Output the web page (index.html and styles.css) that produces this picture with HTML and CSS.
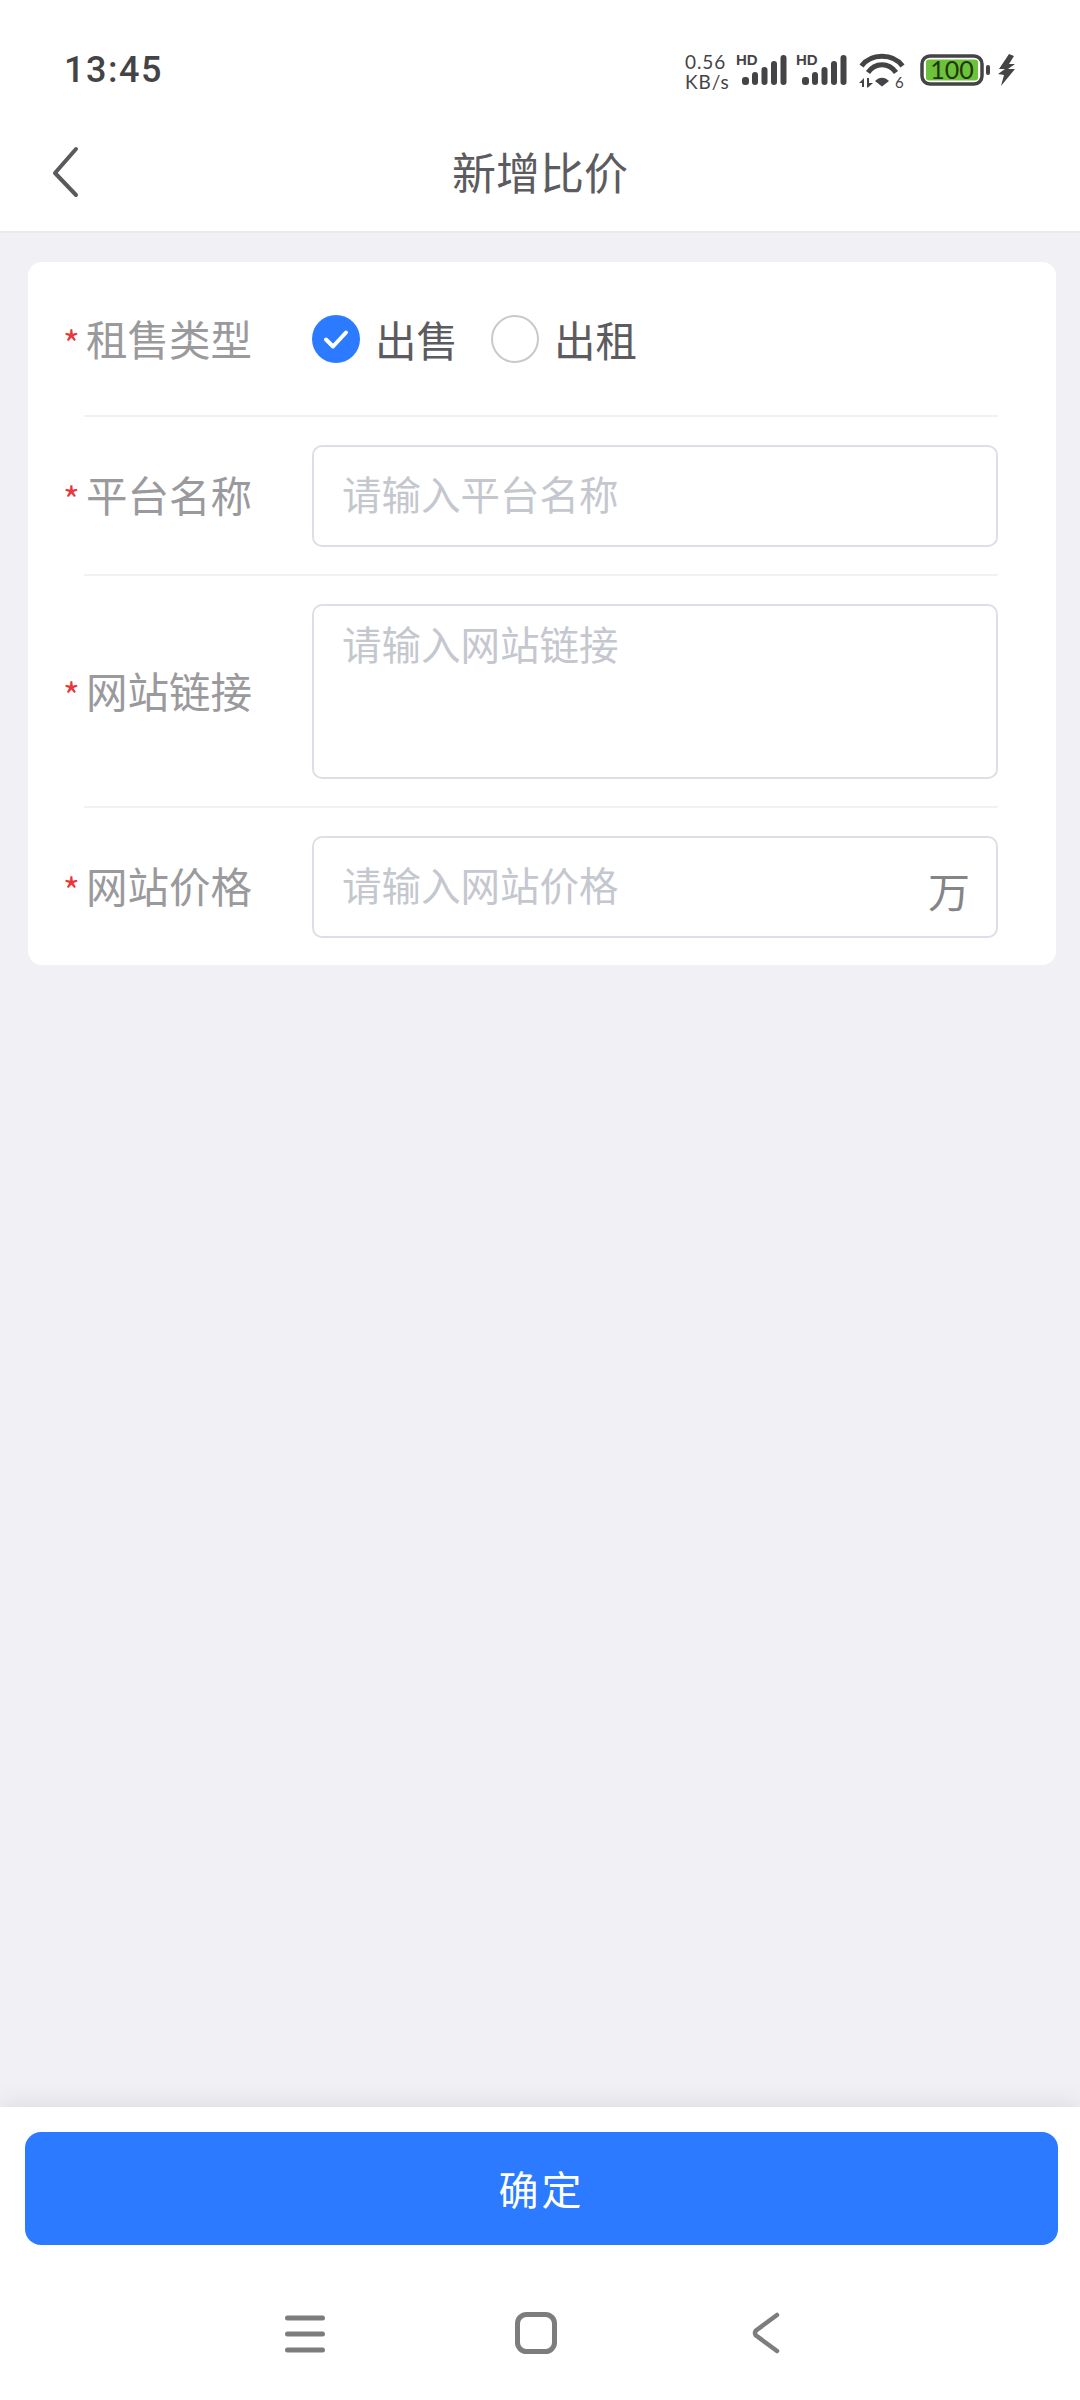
FILE: index.html
```html
<!DOCTYPE html>
<html lang="zh-CN">
<head>
<meta charset="utf-8">
<title>新增比价</title>
<link rel="stylesheet" href="styles.css">
</head>
<body>
<div class="page">
  <header class="top">
    <div class="status">
      <span class="time">13:45</span>
      <div class="status-icons">
        <div class="speed"><span>0.56</span><span>KB/s</span></div>
        <svg class="signal" width="52" height="34" viewBox="0 0 52 34">
          <text class="hd" x="0" y="13">HD</text>
          <rect x="6" y="25" width="7" height="8" rx="3" />
          <rect x="16" y="20" width="6" height="13" rx="3" />
          <rect x="25.500" y="15" width="6" height="18" rx="3" />
          <rect x="35" y="9" width="6" height="24" rx="3" />
          <rect x="44.500" y="3" width="6" height="30" rx="3" />
        </svg>
        <svg class="signal" width="52" height="34" viewBox="0 0 52 34">
          <text class="hd" x="0" y="13">HD</text>
          <rect x="6" y="25" width="7" height="8" rx="3" />
          <rect x="16" y="20" width="6" height="13" rx="3" />
          <rect x="25.500" y="15" width="6" height="18" rx="3" />
          <rect x="35" y="9" width="6" height="24" rx="3" />
          <rect x="44.500" y="3" width="6" height="30" rx="3" />
        </svg>
        <svg class="wifi" width="48" height="42" viewBox="0 0 48 42">
          <path class="arc" d="M3.500 14C13 1 35 1 44.500 14" />
          <path class="arc" d="M10 20.500C17 10 31 10 38 20.500" />
          <path class="fill" d="M17 29C21 24.500 27 24.500 31 29L24 34.500Z" />
          <path class="fill" d="M1 31L6 26V35H4V31ZM9 26H11V31H15L10 35.500H9Z" />
          <text class="wifi-six" x="37" y="35.500">6</text>
        </svg>
        <svg class="battery" width="72" height="34" viewBox="0 0 72 34">
          <rect class="shell" x="2" y="2" width="60" height="28" rx="8" />
          <rect class="level" x="6" y="5.500" width="52" height="21" rx="3" />
          <text class="level-text" x="32" y="25">100</text>
          <rect class="tip" x="66" y="11" width="4" height="10" rx="2" />
        </svg>
        <svg class="bolt" width="18" height="32" viewBox="0 0 18 32">
          <path d="M11 0L1 15H7L0 20L6 21L3 32L17 15H10L17 10H11L16 2Z" />
        </svg>
      </div>
    </div>
    <nav class="title-bar">
      <svg class="back" width="30" height="52" viewBox="0 0 30 52">
        <path d="M26 3L5 27L26 49" />
      </svg>
      <h1 class="title">新增比价</h1>
    </nav>
  </header>

  <main class="card">
    <div class="row row-type">
      <label class="label"><span class="star">*</span>租售类型</label>
      <div class="options">
        <span class="radio radio-on">
          <svg width="48" height="48" viewBox="0 0 48 48"><circle class="on-disc" cx="24" cy="24" r="24" /><path class="on-check" d="M14 24.500L21 31.500L34 17.500" /></svg>
        </span>
        <span class="option-text">出售</span>
        <span class="radio radio-off"></span>
        <span class="option-text">出租</span>
      </div>
    </div>
    <div class="row">
      <label class="label"><span class="star">*</span>平台名称</label>
      <div class="box box-short"><input class="field" placeholder="请输入平台名称"></div>
    </div>
    <div class="row row-area">
      <label class="label"><span class="star">*</span>网站链接</label>
      <div class="box box-tall"><textarea class="field area" placeholder="请输入网站链接"></textarea></div>
    </div>
    <div class="row">
      <label class="label"><span class="star">*</span>网站价格</label>
      <div class="box box-short box-unit"><input class="field" placeholder="请输入网站价格"><span class="unit">万</span></div>
    </div>
  </main>

  <footer class="footer">
    <button class="confirm">确定</button>
    <div class="sys-nav">
      <svg class="sys-menu" width="40" height="38" viewBox="0 0 40 38">
        <path d="M2.500 3H37.500M2.500 19H37.500M2.500 35H37.500" />
      </svg>
      <svg class="sys-home" width="42" height="42" viewBox="0 0 42 42">
        <rect x="2.500" y="2.500" width="37" height="37" rx="9" />
      </svg>
      <svg class="sys-back" width="28" height="42" viewBox="0 0 28 42">
        <path d="M25 3L4 18.500Q2 21 4 23.500L25 39" />
      </svg>
    </div>
  </footer>
</div>
</body>
</html>
```

FILE: styles.css
```css
* { box-sizing: border-box; }

html, body {
  margin: 0;
  padding: 0;
}

body {
  font-family: "Noto Sans CJK SC", "Noto Sans", sans-serif;
  color: #5c5c60;
}

.page {
  width: 1080px;
  height: 2400px;
  background: #f0f0f5;
  display: flex;
  flex-direction: column;
  overflow: hidden;
}

/* status bar + title */
.top {
  background: #fff;
  border-bottom: 2px solid #e9e9ee;
  height: 233px;
}

.status {
  height: 130px;
  padding: 50px 0 0 64px;
  display: flex;
  justify-content: space-between;
  align-items: flex-start;
}

.time {
  font-family: Roboto, sans-serif;
  font-weight: 500;
  font-size: 36px;
  line-height: 40px;
  letter-spacing: 1.500px;
  color: #444446;
}

.status-icons {
  display: flex;
  align-items: flex-start;
  padding: 2px 64px 0 0;
}

.speed {
  display: flex;
  flex-direction: column;
  width: 51px;
  font-family: Lato, sans-serif;
  font-size: 19px;
  line-height: 20px;
  color: #444446;
  letter-spacing: 0.900px;
}

.signal {
  display: block;
  margin: 0 8px 0 0;
  fill: #444446;
}

.hd {
  font-family: "Liberation Sans", sans-serif;
  font-weight: 700;
  font-size: 15px;
  fill: #444446;
}

.wifi {
  display: block;
  margin: 0 14px 0 2px;
}

.arc {
  fill: none;
  stroke: #444446;
  stroke-width: 5;
  stroke-linecap: butt;
}

.fill { fill: #444446; }

.wifi-six {
  font-family: Lato, sans-serif;
  font-size: 15px;
  fill: #444446;
}

.battery {
  display: block;
  margin: 2px 6px 0 0;
}

.shell {
  fill: #fff;
  stroke: #444446;
  stroke-width: 3.500;
}

.level { fill: #6cc23b; }

.level-text {
  font-family: Lato, sans-serif;
  font-size: 25px;
  fill: #23350f;
  text-anchor: middle;
}

.tip { fill: #444446; }

.bolt {
  display: block;
  margin-top: 2px;
  fill: #444446;
}

.title-bar {
  position: relative;
  height: 101px;
  padding-bottom: 20px;
  display: flex;
  align-items: center;
  justify-content: center;
}

.back {
  position: absolute;
  left: 50px;
  top: 16px;
  fill: none;
  stroke: #5a5a5e;
  stroke-width: 4;
  stroke-linecap: round;
  stroke-linejoin: round;
}

.title {
  margin: 0;
  font-size: 44px;
  font-weight: 400;
  line-height: 60px;
  color: #5c5c60;
}

/* form card */
.card {
  margin: 29px 24px 0 28px;
  height: 703px;
  padding: 0 58px 0 56px;
  background: #fff;
  border-radius: 14px;
  overflow: hidden;
}

.row {
  display: flex;
  align-items: center;
  padding: 28px 0 27px;
  border-bottom: 2px solid #f2f2f5;
}

.row-type {
  height: 155px;
  padding: 0;
}

.row-type .label { padding-bottom: 2px; }

.label {
  position: relative;
  width: 228px;
  flex: none;
  padding: 0 0 4px 2px;
  font-size: 41.500px;
  line-height: 56px;
  color: #9a9a9d;
}

.star {
  position: absolute;
  left: -21px;
  top: 4px;
  font-size: 36px;
  line-height: 56px;
  color: #e8363b;
}

.options {
  display: flex;
  align-items: center;
}

.radio {
  display: block;
  width: 48px;
  height: 48px;
  flex: none;
  border-radius: 50%;
}

.radio-on svg { display: block; }

.on-disc { fill: #2b7aff; }

.on-check {
  fill: none;
  stroke: #fff;
  stroke-width: 4;
  stroke-linecap: round;
  stroke-linejoin: round;
}

.radio-off {
  border: 2px solid #c9c9cc;
  margin-left: 33px;
}

.option-text {
  margin-left: 15px;
  font-size: 41.500px;
  line-height: 56px;
  color: #5c5c60;
}

.box {
  flex: 1;
  display: flex;
  align-items: center;
  background: #fff;
  border: 2px solid #dddfe6;
  border-radius: 10px;
  padding: 0 26px 0 28px;
}

.box-short { height: 102px; }

.box-tall {
  height: 175px;
  align-items: flex-start;
}

.field {
  flex: 1;
  min-width: 0;
  width: 100%;
  border: 0;
  outline: 0;
  padding: 0 0 6px;
  margin: 0;
  background: transparent;
  font-family: "Noto Sans CJK SC", "Noto Sans", sans-serif;
  font-size: 39.500px;
  line-height: 56px;
  color: #5c5c60;
}

.field::placeholder {
  color: #c5c7cf;
  opacity: 1;
}

.area {
  display: block;
  height: 150px;
  margin-top: 9px;
  padding: 0;
  resize: none;
  overflow: hidden;
}

.unit {
  flex: none;
  margin: 6px 0 0 0;
  font-size: 42px;
  line-height: 56px;
  color: #858588;
}

/* footer */
.footer {
  margin-top: auto;
  height: 293px;
  background: #fff;
  box-shadow: 0 -3px 24px rgba(0, 0, 0, 0.09);
  padding: 25px 22px 0 25px;
}

.confirm {
  display: block;
  width: 100%;
  height: 113px;
  padding: 0 0 2px;
  border: 0;
  border-radius: 16px;
  background: #2b7aff;
  color: #fff;
  font-family: "Noto Sans CJK SC", "Noto Sans", sans-serif;
  font-size: 40px;
  letter-spacing: 3px;
}

.sys-nav {
  display: flex;
  align-items: flex-start;
  padding: 67px 0 0 260px;
}

.sys-menu,
.sys-home,
.sys-back {
  display: block;
  fill: none;
  stroke: #7d7d7f;
  stroke-width: 5;
  stroke-linecap: round;
  stroke-linejoin: round;
}

.sys-menu { margin-top: 3px; }

.sys-home { margin-left: 190px; }

.sys-back {
  margin-left: 195px;
  stroke-width: 4.500;
}
```
